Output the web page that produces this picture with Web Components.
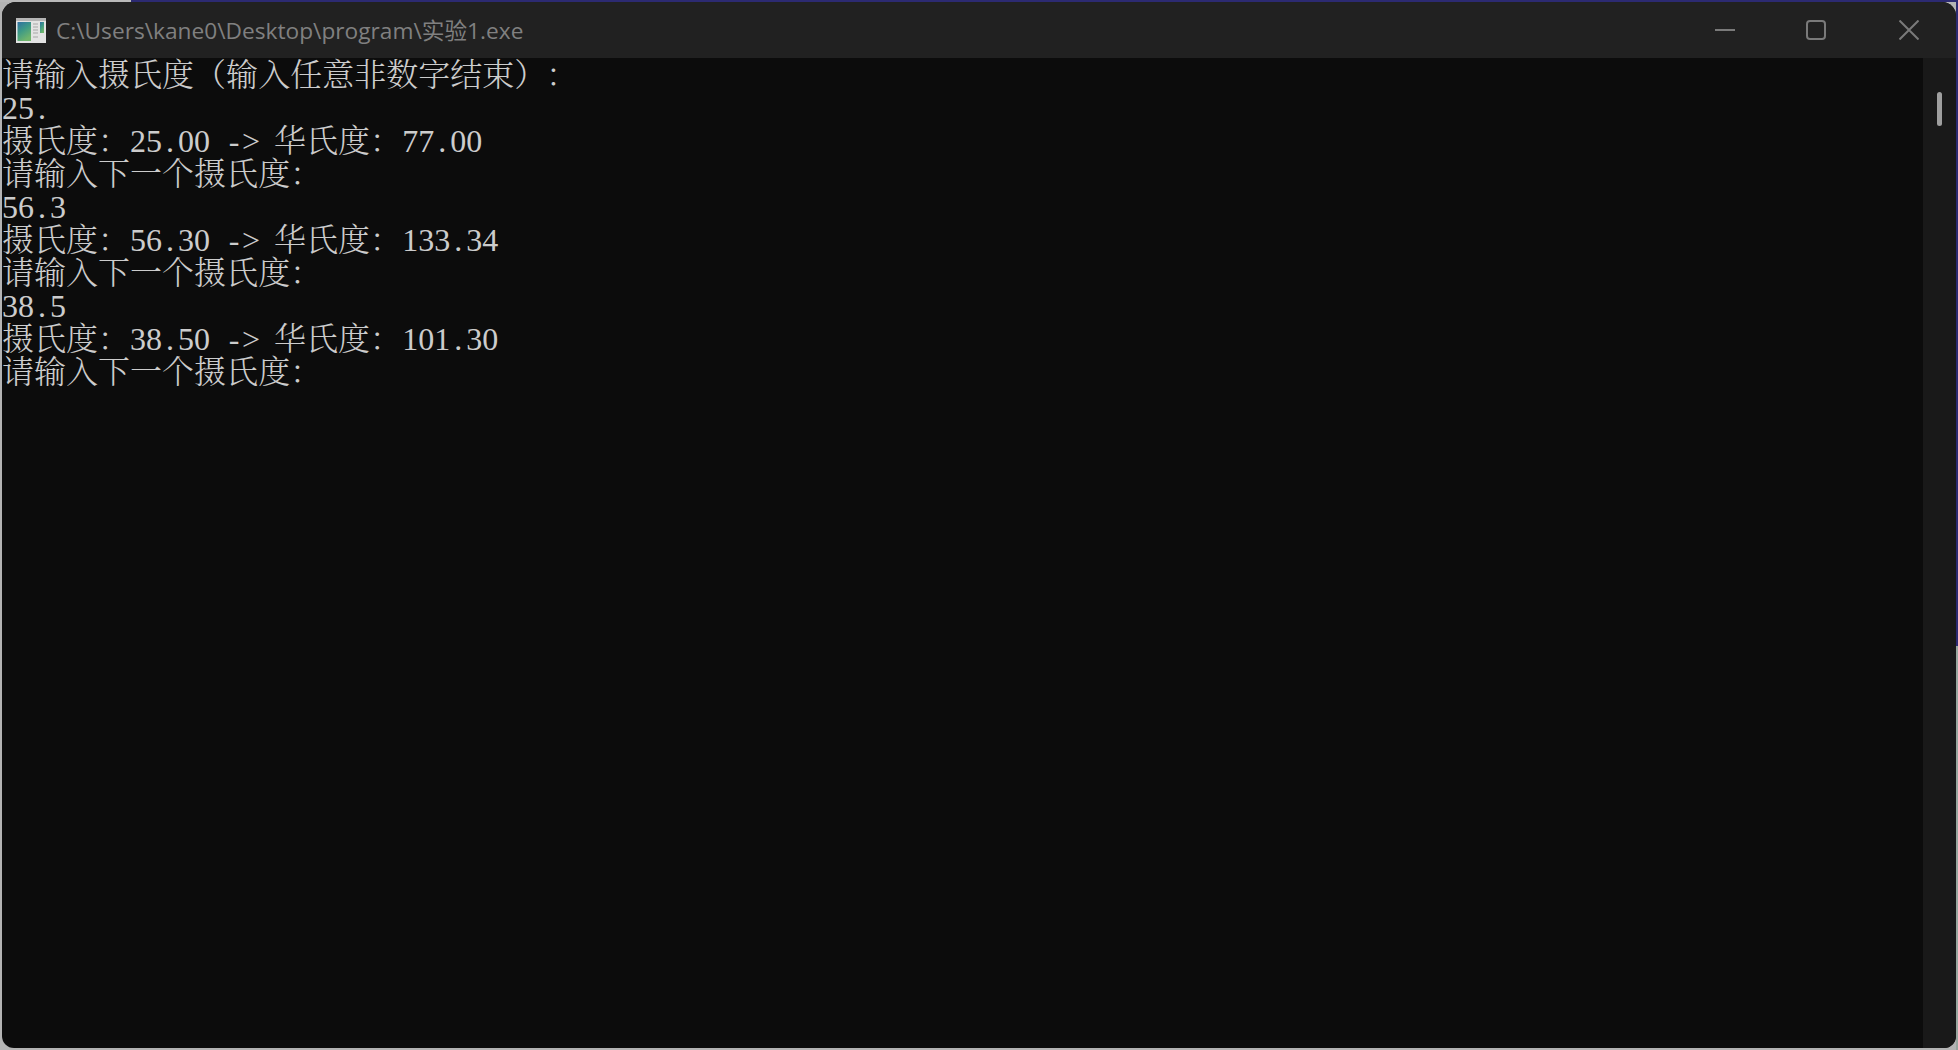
<!DOCTYPE html>
<html lang="zh-CN"><head><meta charset="utf-8"><style>
html,body{margin:0;height:100%;background:#0c0c0c;overflow:hidden}
</style></head><body>
<template id="desk-t"><style>
:host{display:block;box-sizing:border-box;width:1958px;height:1050px;padding:2px;
background:
 linear-gradient(90deg,#b9b9b9 0 131px,#2c2a72 131px) top/100% 2px no-repeat,
 linear-gradient(#2c2a72 0 646px,#98a6a0 646px) right/2px 100% no-repeat,
 #b4b4b4}
</style><slot></slot></template>

<template id="win-t"><style>
:host{display:flex;flex-direction:column;height:100%;background:#0c0c0c;border-radius:14px 14px 12px 12px;overflow:hidden}
</style><slot name="bar"></slot><slot></slot></template>

<template id="bar-t"><style>
:host{display:flex;align-items:center;flex:none;height:56px;background:#212121;color:#808080;font:22.7px "Open Sans","Noto Sans CJK SC",sans-serif}
svg{display:block;flex:none}
.icon{margin-left:14px;margin-right:10px}
.t{flex:1;white-space:nowrap;position:relative;top:-1px}
.b{flex:none;stroke:#7a7a7a;stroke-width:2;fill:none}
.min{margin-right:71px}.max{margin-right:73px}.cls{margin-right:37px}
</style>
<svg class="icon" width="30" height="25" viewBox="0 0 30 25"><defs><linearGradient id="g" x1="0" y1="0" x2="0.5" y2="1"><stop offset="0" stop-color="#2f6fa3"/><stop offset=".5" stop-color="#3e9a86"/><stop offset="1" stop-color="#70b56c"/></linearGradient></defs>
<rect width="30" height="25" fill="#e3e3e3"/><rect width="30" height="3" fill="#b5b5b5"/><rect x="1.5" y="4" width="13.5" height="19" fill="url(#g)"/><rect x="24" y="4" width="4" height="11" fill="url(#g)"/>
<path d="M17 6h5M17 9h5M17 12h5M17 15h5M17 19h5" stroke="#a8a8a8" stroke-width="1.2"/></svg>
<span class="t"><slot></slot></span>
<svg class="b min" width="20" height="4" viewBox="0 0 20 4"><path d="M0 2h20"/></svg>
<svg class="b max" width="20" height="20" viewBox="0 0 20 20"><rect x="1" y="1" width="18" height="18" rx="3"/></svg>
<svg class="b cls" width="20" height="20" viewBox="0 0 20 20"><path d="M0.5 0.5l19 19M19.5 0.5l-19 19"/></svg>
</template>

<template id="body-t"><style>
:host{display:flex;flex:1;min-height:0}
.text{flex:1;padding-top:1px;color:#ccc;font:300 32px/33px "Liberation Serif","Noto Serif CJK SC","Noto Sans CJK SC",serif;text-spacing-trim:space-all;text-autospace:no-autospace;font-kerning:none}
.sb{flex:none;width:33px;background:#191919;display:flex;justify-content:center;padding-top:34px;box-sizing:border-box}
.th{width:5px;height:34px;border-radius:3px;background:#9f9f9f}
</style><div class="text"><slot></slot></div><div class="sb"><div class="th"></div></div></template>

<template id="line-t"><style>
:host{display:block;height:33px;white-space:pre}
::slotted(span){display:inline-block;width:16px;text-align:center}
</style><slot></slot></template>

<con-desktop><con-window>
<con-titlebar slot="bar">C:\Users\kane0\Desktop\program\实验1.exe</con-titlebar>
<con-body>
<con-line>请输入摄氏度（输入任意非数字结束）：</con-line>
<con-line>25.</con-line>
<con-line>摄氏度：25.00 -&gt; 华氏度：77.00</con-line>
<con-line>请输入下一个摄氏度：</con-line>
<con-line>56.3</con-line>
<con-line>摄氏度：56.30 -&gt; 华氏度：133.34</con-line>
<con-line>请输入下一个摄氏度：</con-line>
<con-line>38.5</con-line>
<con-line>摄氏度：38.50 -&gt; 华氏度：101.30</con-line>
<con-line>请输入下一个摄氏度：</con-line>
</con-body>
</con-window></con-desktop>

<script>
const tpl=id=>document.getElementById(id).content.cloneNode(true);
const simple=(name,id)=>customElements.define(name,class extends HTMLElement{constructor(){super();this.attachShadow({mode:'open'}).append(tpl(id));}});
simple('con-desktop','desk-t');simple('con-window','win-t');simple('con-titlebar','bar-t');simple('con-body','body-t');
customElements.define('con-line',class extends HTMLElement{
 constructor(){super();this.attachShadow({mode:'open'}).append(tpl('line-t'));}
 connectedCallback(){
  const t=this.textContent;this.textContent='';
  for(const ch of t){
   if(ch.charCodeAt(0)<128){const e=document.createElement('span');e.textContent=ch;this.append(e);}
   else this.append(ch);
  }
 }});
</script>
</body></html>
